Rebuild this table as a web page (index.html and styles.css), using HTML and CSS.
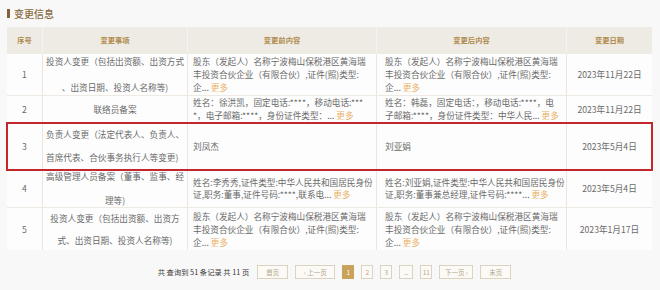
FILE: index.html
```html
<!DOCTYPE html>
<html lang="zh-CN">
<head>
<meta charset="utf-8">
<title>变更信息</title>
<link rel="stylesheet" href="styles.css">
</head>
<body>
<div class="page">
  <div class="title"><span class="bar"></span><span class="title-text">变更信息</span></div>
  <div class="table">
    <div class="row head">
      <div class="cell c1">序号</div>
      <div class="cell c2">变更事项</div>
      <div class="cell c3 center">变更前内容</div>
      <div class="cell c4 center">变更后内容</div>
      <div class="cell c5">变更日期</div>
    </div>
    <div class="row r1">
      <div class="cell c1">1</div>
      <div class="cell c2"><div class="lines g13"><span>投资人变更（包括出资额、出资方式</span><span>、出资日期、投资人名称等)</span></div></div>
      <div class="cell c3"><div class="txt">股东（发起人）名称宁波梅山保税港区黄海瑞<br>丰投资合伙企业（有限合伙）,证件(照)类型:<br>企... <span class="more">更多</span></div></div>
      <div class="cell c4"><div class="txt">股东（发起人）名称宁波梅山保税港区黄海瑞<br>丰投资合伙企业（有限合伙）,证件(照)类型:<br>企... <span class="more">更多</span></div></div>
      <div class="cell c5">2023年11月22日</div>
    </div>
    <div class="row r2">
      <div class="cell c1">2</div>
      <div class="cell c2">联络员备案</div>
      <div class="cell c3"><div class="txt">姓名：徐洪凯，固定电话:****，移动电话:***<br>*，电子邮箱:****，身份证件类型：... <span class="more">更多</span></div></div>
      <div class="cell c4"><div class="txt">姓名：韩磊，固定电话：，移动电话:****，电<br>子邮箱:****，身份证件类型：中华人民... <span class="more">更多</span></div></div>
      <div class="cell c5">2023年11月22日</div>
    </div>
    <div class="row r3 marked">
      <div class="cell c1">3</div>
      <div class="cell c2 left"><div class="lines g10"><span>负责人变更（法定代表人、负责人、</span><span>首席代表、合伙事务执行人等变更)</span></div></div>
      <div class="cell c3"><div class="txt">刘凤杰</div></div>
      <div class="cell c4"><div class="txt">刘亚娟</div></div>
      <div class="cell c5">2023年5月4日</div>
    </div>
    <div class="row r4">
      <div class="cell c1">4</div>
      <div class="cell c2"><div class="lines g11"><span>高级管理人员备案（董事、监事、经</span><span>理等)</span></div></div>
      <div class="cell c3"><div class="txt">姓名:李秀秀,证件类型:中华人民共和国居民身份<br>证,职务:董事,证件号码:****,联系电... <span class="more">更多</span></div></div>
      <div class="cell c4"><div class="txt">姓名:刘亚娟,证件类型:中华人民共和国居民身份<br>证,职务:董事兼总经理,证件号码:****... <span class="more">更多</span></div></div>
      <div class="cell c5">2023年5月4日</div>
    </div>
    <div class="row r5">
      <div class="cell c1">5</div>
      <div class="cell c2"><div class="lines g9"><span>投资人变更（包括出资额、出资方</span><span>式、出资日期、投资人名称等)</span></div></div>
      <div class="cell c3"><div class="txt">股东（发起人）名称宁波梅山保税港区黄海瑞<br>丰投资合伙企业（有限合伙）,证件(照)类型:<br>企... <span class="more">更多</span></div></div>
      <div class="cell c4"><div class="txt">股东（发起人）名称宁波梅山保税港区黄海瑞<br>丰投资合伙企业（有限合伙）,证件(照)类型:<br>企... <span class="more">更多</span></div></div>
      <div class="cell c5">2023年1月17日</div>
    </div>
  </div>
  <div class="pager">
    <span class="summary">共 查询到 51 条记录 共 11 页</span>
    <span class="btn w-first">首页</span>
    <span class="btn w-prev">‹ 上一页</span>
    <span class="btn num active">1</span>
    <span class="btn num">2</span>
    <span class="btn num">3</span>
    <span class="btn num w-dots">..</span>
    <span class="btn num">11</span>
    <span class="btn w-next">下一页 ›</span>
    <span class="btn w-last">末页</span>
  </div>
</div>
</body>
</html>
```
FILE: styles.css
```css
* { box-sizing: border-box; }
html, body { margin: 0; padding: 0; }
body {
  background: #f8f8f8;
  font-family: "Noto Sans CJK SC", "Noto Sans", sans-serif;
  color: #666;
  width: 660px;
  height: 290px;
  overflow: hidden;
}
.page { padding: 0 8px 0 7px; }
.title {
  height: 27px;
  display: flex;
  align-items: center;
  gap: 4px;
}
.bar {
  width: 3px;
  height: 9px;
  background: #85633a;
}
.title-text {
  font-size: 10px;
  color: #8a6a40;
  font-weight: 500;
}
.table {
  width: 645px;
  background: #fdfdfd;
}
.row {
  display: grid;
  grid-template-columns: 36px 145px 189px 190px 85px;
  border-bottom: 1px solid #eeeae3;
}
.row.head { height: 27px; background: #eeebe5; border-bottom: none; }
.r1 { height: 42px; }
.r2 { height: 27px; }
.r3 { height: 47px; }
.r4 { height: 38px; }
.r5 { height: 42px; border-bottom: none; }
.marked {
  position: relative;
  z-index: 1;
  outline: 2px solid #c4262e;
  outline-offset: -1px;
}
.cell {
  display: flex;
  align-items: center;
  justify-content: center;
  border-right: 1px solid #ebe7e0;
  font-size: 8.64px;
  line-height: 13px;
  color: #6a6a6a;
  white-space: nowrap;
  overflow: hidden;
  text-align: center;
}
.cell.c5 { border-right: none; }
.head .cell {
  font-size: 7.3px;
  font-weight: 700;
  color: #b08a4c;
  border-right-color: #f6f4f0;
}
.head .cell.c3, .head .cell.c4 { justify-content: center; padding: 0; }
.cell.c3 { justify-content: flex-start; padding-left: 5px; text-align: left; }
.cell.c4 { justify-content: flex-start; padding-left: 8px; text-align: left; }
.cell.c2 { padding: 0 3px; }
.lines { display: flex; flex-direction: column; align-items: center; }
.left .lines { align-items: flex-start; }
.g13 { gap: 13px; }
.g10 { gap: 10px; }
.g11 { gap: 11px; }
.g9 { gap: 9px; }
.txt { line-height: 13px; }
.r4 .txt { line-height: 11.5px; }
.more { color: #eab064; }
.pager {
  display: flex;
  align-items: center;
  justify-content: center;
  gap: 7px;
  padding-top: 15px;
  padding-left: 10px;
}
.summary {
  font-size: 7.3px;
  color: #3a3a3a;
  margin-right: 1px;
}
.btn {
  height: 14px;
  border: 1px solid #dcd2c0;
  display: flex;
  align-items: center;
  justify-content: center;
  font-size: 6.5px;
  color: #b7a78a;
  background: #fbfaf7;
}
.btn.num { width: 12px; }
.btn.w-dots { width: 14px; }
.btn.active { background: #c9a35b; border-color: #c9a35b; color: #fff; }
.w-first, .w-last { width: 31px; }
.w-prev { width: 40px; }
.w-next { width: 34px; }
```
